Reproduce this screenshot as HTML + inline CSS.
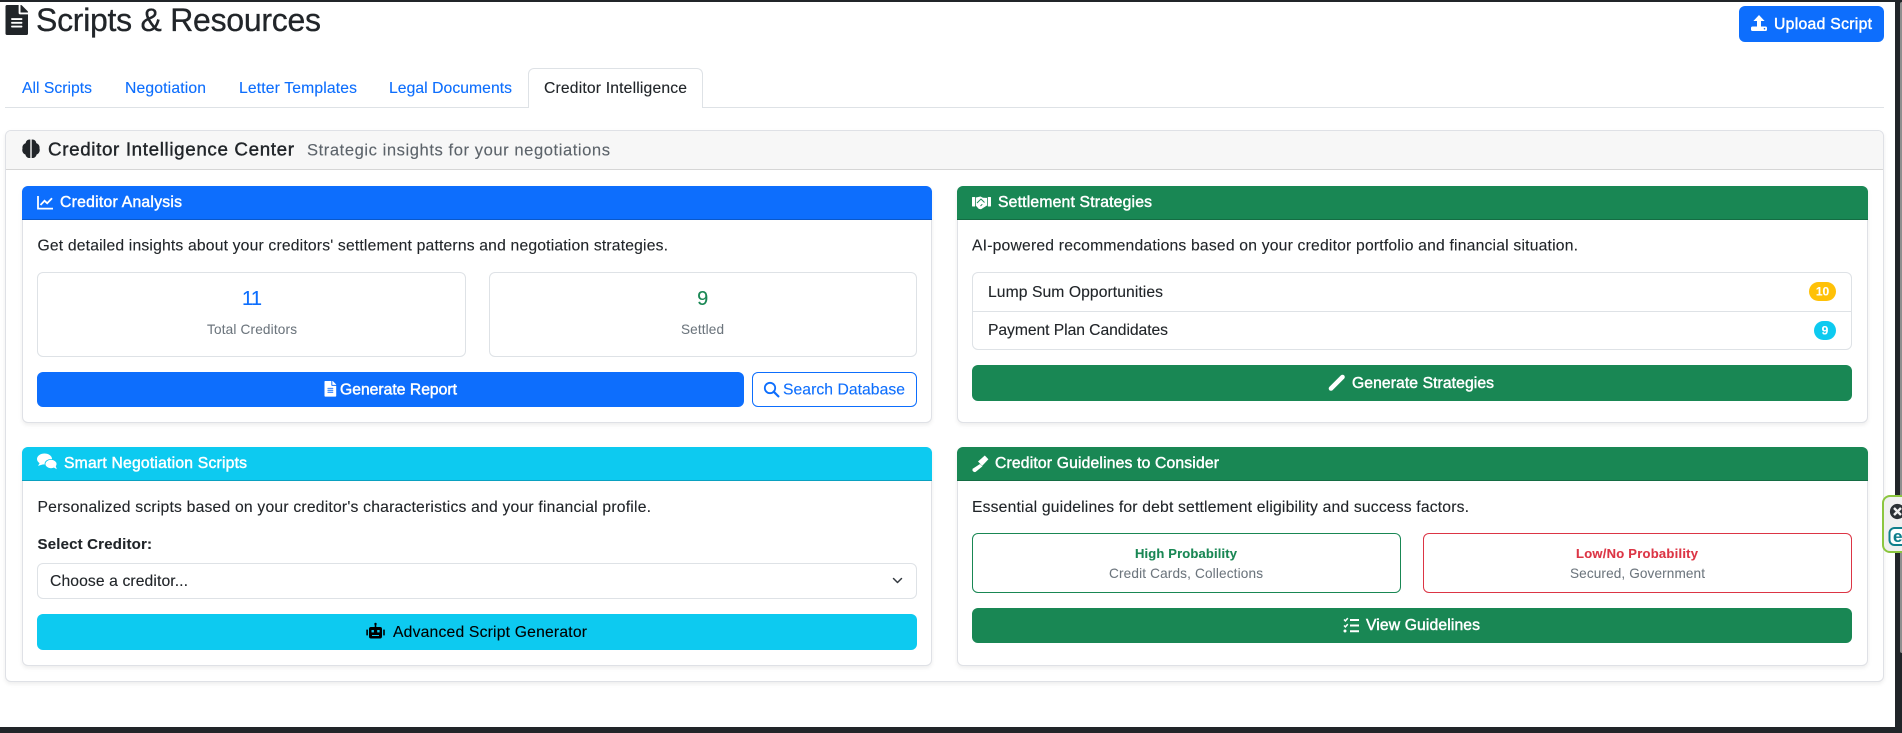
<!DOCTYPE html>
<html lang="en">
<head>
<meta charset="utf-8">
<title>Scripts &amp; Resources</title>
<style>
html,body{margin:0;padding:0;background:#fff;width:1902px;height:733px;overflow:hidden}
body{position:relative;font-family:"Liberation Sans",sans-serif}
.b{position:absolute;box-sizing:border-box}
.card{background:#fff;border:1px solid #dfe1e6;border-radius:6px;box-shadow:0 2px 4px rgba(0,0,0,.075)}
.hd{border-radius:6px 6px 0 0;border-bottom:1px solid rgba(0,0,0,.2)}
.btn{border-radius:6px}
.stat{border:1px solid #dee2e6;border-radius:6px;background:#fff}
svg{position:absolute;left:0;top:0}
text{font-family:"Liberation Sans",sans-serif;font-size:15.7px;fill:#212529;stroke:#212529;stroke-width:.12px;paint-order:stroke}
.w{fill:#fff;stroke:#fff;stroke-width:.45px}
.s{font-size:13.6px;fill:#6c757d;stroke:#6c757d;stroke-width:.05px}
.bl{fill:#0d6efd;stroke:#0d6efd}
</style>
</head>
<body>
<!-- window chrome -->
<div class="b" style="left:0;top:0;width:1902px;height:2px;background:#212529"></div>
<div class="b" style="left:0;top:727px;width:1902px;height:6px;background:#212529"></div>
<div class="b" style="left:1895px;top:0;width:7px;height:733px;background:#212529"></div>
<div class="b" style="left:1899.5px;top:2px;width:2.5px;height:651px;background:#8f8f8f;border-radius:2px 0 0 2px"></div>

<!-- upload button -->
<div class="b btn" style="left:1739px;top:6px;width:145px;height:36px;background:#0d6efd"></div>

<!-- tabs -->
<div class="b" style="left:5px;top:107px;width:1879px;height:1px;background:#dee2e6"></div>
<div class="b" style="left:528px;top:68px;width:175px;height:40px;background:#fff;border:1px solid #dee2e6;border-bottom:0;border-radius:6px 6px 0 0"></div>

<!-- outer card -->
<div class="b card" style="left:5px;top:130px;width:1879px;height:552px"></div>
<div class="b" style="left:6px;top:131px;width:1877px;height:39px;background:#f7f7f7;border-bottom:1px solid #d6d6d6;border-radius:5px 5px 0 0"></div>

<!-- creditor analysis -->
<div class="b card" style="left:22px;top:186px;width:910px;height:237px"></div>
<div class="b hd" style="left:22px;top:186px;width:910px;height:34px;background:#0d6efd"></div>
<div class="b stat" style="left:37px;top:272px;width:429px;height:85px"></div>
<div class="b stat" style="left:489px;top:272px;width:428px;height:85px"></div>
<div class="b btn" style="left:37px;top:372px;width:707px;height:35px;background:#0d6efd"></div>
<div class="b btn" style="left:752px;top:372px;width:165px;height:35px;border:1px solid #0d6efd;background:#fff"></div>

<!-- settlement strategies -->
<div class="b card" style="left:957px;top:186px;width:911px;height:237px"></div>
<div class="b hd" style="left:957px;top:186px;width:911px;height:34px;background:#198754"></div>
<div class="b stat" style="left:972px;top:272px;width:880px;height:78px"></div>
<div class="b" style="left:973px;top:311px;width:878px;height:1px;background:#dee2e6"></div>
<div class="b" style="left:1809px;top:282px;width:27px;height:19px;border-radius:10px;background:#ffc107"></div>
<div class="b" style="left:1814px;top:321px;width:22px;height:19px;border-radius:10px;background:#0dcaf0"></div>
<div class="b btn" style="left:972px;top:365px;width:880px;height:36px;background:#198754"></div>

<!-- smart scripts -->
<div class="b card" style="left:22px;top:447px;width:910px;height:219px"></div>
<div class="b hd" style="left:22px;top:447px;width:910px;height:34px;background:#0dcaf0"></div>
<div class="b stat" style="left:37px;top:563px;width:880px;height:36px"></div>
<div class="b btn" style="left:37px;top:614px;width:880px;height:36px;background:#0dcaf0"></div>

<!-- guidelines -->
<div class="b card" style="left:957px;top:447px;width:911px;height:219px"></div>
<div class="b hd" style="left:957px;top:447px;width:911px;height:34px;background:#198754"></div>
<div class="b" style="left:972px;top:533px;width:429px;height:60px;border:1px solid #198754;border-radius:6px"></div>
<div class="b" style="left:1423px;top:533px;width:429px;height:60px;border:1px solid #dc3545;border-radius:6px"></div>
<div class="b btn" style="left:972px;top:608px;width:880px;height:35px;background:#198754"></div>

<!-- side widget -->
<div class="b" style="left:1882px;top:495px;width:30px;height:58px;background:#f0f0f0;border:2px solid #8cc63f;border-radius:8px"></div>

<svg width="1902" height="733" viewBox="0 0 1902 733" xmlns="http://www.w3.org/2000/svg">
  <defs>
    <path id="doc" d="M224 136V0H24C10.7 0 0 10.7 0 24v464c0 13.3 10.7 24 24 24h336c13.3 0 24-10.7 24-24V160H248c-13.2 0-24-10.8-24-24zm64 236c0 6.6-5.4 12-12 12H108c-6.6 0-12-5.4-12-12v-8c0-6.6 5.4-12 12-12h168c6.6 0 12 5.4 12 12v8zm0-64c0 6.6-5.4 12-12 12H108c-6.6 0-12-5.4-12-12v-8c0-6.6 5.4-12 12-12h168c6.6 0 12 5.4 12 12v8zm0-72v8c0 6.6-5.4 12-12 12H108c-6.6 0-12-5.4-12-12v-8c0-6.6 5.4-12 12-12h168c6.6 0 12 5.4 12 12zm96-114.1v6.1H256V0h6.1c6.4 0 12.5 2.5 17 7l97.9 98c4.5 4.5 7 10.6 7 16.9z"/>
  </defs>

  <!-- page header -->
  <use href="#doc" transform="translate(5.5 5) scale(.0586)" fill="#212529"/>
  <text x="36" y="31" style="font-size:32px;stroke-width:.3px" textLength="285" lengthAdjust="spacing">Scripts &amp; Resources</text>

  <!-- upload -->
  <g fill="#fff">
    <path d="M1759 15l5.6 6h-3.6v6h-4v-6h-3.6z"/>
    <rect x="1751" y="26.5" width="16" height="4.5" rx="1.5"/>
  </g>
  <circle cx="1764.5" cy="28.7" r=".8" fill="#0d6efd"/>
  <text class="w" x="1774" y="29" textLength="98" lengthAdjust="spacing">Upload Script</text>

  <!-- tabs -->
  <text class="bl" x="22" y="93" textLength="70" lengthAdjust="spacing">All Scripts</text>
  <text class="bl" x="125" y="93" textLength="81" lengthAdjust="spacing">Negotiation</text>
  <text class="bl" x="239" y="93" textLength="118" lengthAdjust="spacing">Letter Templates</text>
  <text class="bl" x="389" y="93" textLength="123" lengthAdjust="spacing">Legal Documents</text>
  <text x="544" y="93" textLength="143" lengthAdjust="spacing">Creditor Intelligence</text>

  <!-- section header -->
  <g fill="#212529">
    <path d="M30.3 139.5c-2.8-.3-4.4 1.6-4.6 3.6-2.3.8-3.6 2.8-3.2 5.3-.8 2.7.4 5.3 2.9 6.1.5 2.2 2.2 3.9 4.9 3.5z"/>
    <path d="M31.7 139.5c2.8-.3 4.4 1.6 4.6 3.6 2.3.8 3.6 2.8 3.2 5.3.8 2.7-.4 5.3-2.9 6.1-.5 2.2-2.2 3.9-4.9 3.5z"/>
  </g>
  <text x="48" y="155.5" style="font-size:18.8px;stroke-width:.4px" textLength="246" lengthAdjust="spacing">Creditor Intelligence Center</text>
  <text x="307" y="155.5" style="font-size:16.6px;fill:#5c636a;stroke:#5c636a" textLength="303" lengthAdjust="spacing">Strategic insights for your negotiations</text>

  <!-- creditor analysis -->
  <path d="M38 196v12.6h15M40.5 205l4-4.2 2.7 2.4 4.8-5" fill="none" stroke="#fff" stroke-width="1.8"/>
  <text class="w" x="60" y="207" textLength="122" lengthAdjust="spacing">Creditor Analysis</text>
  <text x="37.5" y="250.5" textLength="630.5" lengthAdjust="spacing">Get detailed insights about your creditors' settlement patterns and negotiation strategies.</text>
  <text x="251.6" y="305" text-anchor="middle" style="font-size:20px;fill:#0d6efd;stroke:#0d6efd;letter-spacing:-.8px">11</text>
  <text class="s" x="207" y="334" textLength="90" lengthAdjust="spacing">Total Creditors</text>
  <text x="702.7" y="305" text-anchor="middle" style="font-size:20px;fill:#198754;stroke:#198754">9</text>
  <text class="s" x="681" y="334" textLength="43" lengthAdjust="spacing">Settled</text>
  <use href="#doc" transform="translate(324.5 381) scale(.0305)" fill="#fff"/>
  <text class="w" x="340" y="394.5" textLength="117" lengthAdjust="spacing">Generate Report</text>
  <circle cx="770" cy="388" r="5.2" fill="none" stroke="#0d6efd" stroke-width="1.8"/>
  <path d="M773.7 391.7l4.7 4.7" stroke="#0d6efd" stroke-width="2.2" stroke-linecap="round"/>
  <text class="bl" x="783" y="394.5" textLength="122" lengthAdjust="spacing">Search Database</text>

  <!-- settlement strategies -->
  <g fill="#fff">
    <rect x="972" y="197" width="3.2" height="9.5" rx=".6"/>
    <rect x="987.8" y="197" width="3.2" height="9.5" rx=".6"/>
    <path d="M976 197.5l4.5-1 2.5 1.2 4 .2v7.6l-1.2.8-4.8 3-2.2-.4-2.8-3z"/>
  </g>
  <path d="M977 203l4-4 3.5 3.5M980.5 206l1.8-1.8" stroke="#198754" stroke-width=".9" fill="none"/>
  <text class="w" x="998" y="207" textLength="154" lengthAdjust="spacing">Settlement Strategies</text>
  <text x="972" y="250.5" textLength="606" lengthAdjust="spacing">AI-powered recommendations based on your creditor portfolio and financial situation.</text>
  <text x="988" y="297" textLength="175" lengthAdjust="spacing">Lump Sum Opportunities</text>
  <text x="988" y="335" textLength="180" lengthAdjust="spacing">Payment Plan Candidates</text>
  <text x="1822.5" y="295.5" text-anchor="middle" style="font-size:12px;font-weight:bold;fill:#fff;stroke:#fff">10</text>
  <text x="1825" y="334.5" text-anchor="middle" style="font-size:12px;font-weight:bold;fill:#fff;stroke:#fff">9</text>
  <path d="M1331 388.5l11.5-11.5" stroke="#fff" stroke-width="4.6" stroke-linecap="round"/>
  <path d="M1329.5 390.5l2.5-1-1.5-1.5z" fill="#fff"/>
  <text class="w" x="1352" y="388" textLength="142" lengthAdjust="spacing">Generate Strategies</text>

  <!-- smart scripts -->
  <g fill="#fff">
    <ellipse cx="44.5" cy="459" rx="7.5" ry="5.5"/>
    <path d="M40 462.5l-2 3.4 5.5-1.7z"/>
    <ellipse cx="51" cy="464" rx="6" ry="4.6" stroke="#0dcaf0" stroke-width=".8"/>
    <path d="M53 467l3.8 2.2-1.2-3.6z"/>
  </g>
  <text class="w" x="64" y="468" textLength="183" lengthAdjust="spacing">Smart Negotiation Scripts</text>
  <text x="37.5" y="512" textLength="613.5" lengthAdjust="spacing">Personalized scripts based on your creditor's characteristics and your financial profile.</text>
  <text x="37.5" y="549" style="font-weight:bold;font-size:15px" textLength="114.5" lengthAdjust="spacing">Select Creditor:</text>
  <text x="50" y="586" textLength="138" lengthAdjust="spacing">Choose a creditor...</text>
  <path d="M893.5 578.5l4 4 4-4" fill="none" stroke="#343a40" stroke-width="1.5" stroke-linecap="round" stroke-linejoin="round"/>
  <g fill="#000">
    <rect x="369" y="627" width="13" height="11.5" rx="2"/>
    <rect x="374.7" y="624" width="1.6" height="3.5"/>
    <circle cx="375.5" cy="624" r="1.2"/>
    <rect x="366.3" y="629.5" width="1.6" height="6" rx=".6"/>
    <rect x="383.2" y="629.5" width="1.6" height="6" rx=".6"/>
  </g>
  <rect x="371.5" y="630" width="2.4" height="2.4" fill="#0dcaf0"/>
  <rect x="377.2" y="630" width="2.4" height="2.4" fill="#0dcaf0"/>
  <rect x="372" y="635" width="7" height="1" fill="#0dcaf0"/>
  <text x="393" y="637" style="fill:#000;stroke:#000" textLength="194" lengthAdjust="spacing">Advanced Script Generator</text>

  <!-- guidelines -->
  <g fill="#fff">
    <path d="M978 461.5l6.8-6 3.6 3.8-6.2 6.6z"/>
    <path d="M980 464l2.4 2.4-6.6 5.4c-1 .8-2.2.1-2.8-.5-.6-.6-.9-1.8-.1-2.7z"/>
  </g>
  <text class="w" x="995" y="468" textLength="224" lengthAdjust="spacing">Creditor Guidelines to Consider</text>
  <text x="972" y="512" textLength="497" lengthAdjust="spacing">Essential guidelines for debt settlement eligibility and success factors.</text>
  <text x="1135" y="558" style="font-size:13px;font-weight:bold;fill:#198754;stroke:#198754" textLength="102" lengthAdjust="spacing">High Probability</text>
  <text class="s" x="1109" y="578" textLength="154" lengthAdjust="spacing">Credit Cards, Collections</text>
  <text x="1576" y="558" style="font-size:13px;font-weight:bold;fill:#dc3545;stroke:#dc3545" textLength="122" lengthAdjust="spacing">Low/No Probability</text>
  <text class="s" x="1570" y="578" textLength="135" lengthAdjust="spacing">Secured, Government</text>
  <path d="M1344 619.5l1.4 1.4 2.4-2.8M1344 625.5l1.4 1.4 2.4-2.8" fill="none" stroke="#fff" stroke-width="1.5"/>
  <circle cx="1345" cy="631" r="1.5" fill="#fff"/>
  <path d="M1350 620h9M1350 625.5h9M1350 631.2h9" stroke="#fff" stroke-width="2"/>
  <text class="w" x="1366" y="630" textLength="114" lengthAdjust="spacing">View Guidelines</text>

  <!-- side widget icons -->
  <circle cx="1897.5" cy="511.5" r="7.6" fill="#2b3035"/>
  <path d="M1894 508l7 7M1901 508l-7 7" stroke="#f0f0f0" stroke-width="2.4"/>
  <rect x="1889.5" y="528" width="20" height="17" rx="5" fill="#fff" stroke="#0f7f8c" stroke-width="2"/>
  <text x="1893" y="542" style="font-size:17px;font-weight:bold;fill:#0f7f8c;stroke:#0f7f8c">e</text>
</svg>
</body>
</html>
